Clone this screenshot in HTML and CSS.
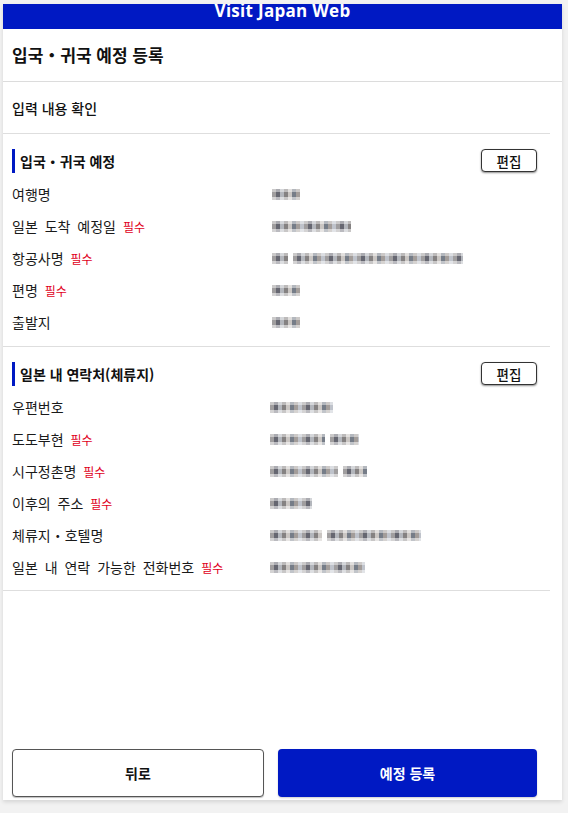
FILE: index.html
```html
<!DOCTYPE html>
<html lang="ko">
<head>
<meta charset="utf-8">
<title>Visit Japan Web</title>
<link rel="stylesheet" href="styles.css">
</head>
<body>
<div class="card">
  <header class="brand"><span class="brand-text">Visit Japan Web</span></header>
  <h1 class="page-title">입국・귀국 예정 등록</h1>
  <div class="subtitle">입력 내용 확인</div>
  <div class="sections">
    <section class="block">
      <div class="block-head">
        <h2 class="block-title">입국・귀국 예정</h2>
        <button class="edit-btn" type="button">편집</button>
      </div>
      <div class="row"><span class="label">여행명</span><span class="mosaic" style="width:28px"></span></div>
      <div class="row"><span class="label">일본 도착 예정일 <em class="req">필수</em></span><span class="mosaic" style="width:79px"></span></div>
      <div class="row"><span class="label">항공사명 <em class="req">필수</em></span><span class="mosaic-group"><span class="mosaic" style="width:16px"></span><span class="mosaic" style="width:170px"></span></span></div>
      <div class="row"><span class="label">편명 <em class="req">필수</em></span><span class="mosaic" style="width:28px"></span></div>
      <div class="row"><span class="label">출발지</span><span class="mosaic" style="width:28px"></span></div>
    </section>
    <section class="block">
      <div class="block-head">
        <h2 class="block-title">일본 내 연락처(체류지)</h2>
        <button class="edit-btn" type="button">편집</button>
      </div>
      <div class="row"><span class="label">우편번호</span><span class="mosaic shift" style="width:63px"></span></div>
      <div class="row"><span class="label">도도부현 <em class="req">필수</em></span><span class="mosaic-group shift"><span class="mosaic" style="width:55px"></span><span class="mosaic" style="width:29px"></span></span></div>
      <div class="row"><span class="label">시구정촌명 <em class="req">필수</em></span><span class="mosaic-group shift"><span class="mosaic" style="width:68px"></span><span class="mosaic" style="width:24px"></span></span></div>
      <div class="row"><span class="label">이후의 주소 <em class="req">필수</em></span><span class="mosaic shift" style="width:42px"></span></div>
      <div class="row"><span class="label">체류지・호텔명</span><span class="mosaic-group shift"><span class="mosaic" style="width:52px"></span><span class="mosaic" style="width:94px"></span></span></div>
      <div class="row"><span class="label">일본 내 연락 가능한 전화번호 <em class="req">필수</em></span><span class="mosaic shift" style="width:95px"></span></div>
    </section>
  </div>
  <div class="actions">
    <button class="btn btn-back" type="button">뒤로</button>
    <button class="btn btn-primary" type="button">예정 등록</button>
  </div>
</div>
</body>
</html>
```

FILE: styles.css
```css
* { box-sizing: border-box; }
html, body { margin: 0; padding: 0; }
body {
  background: #f2f2f2;
  font-family: "Noto Sans CJK KR", "Noto Sans", sans-serif;
  color: #111;
  height: 813px;
  overflow: hidden;
}
.card {
  margin: 4px 6px 0 3px;
  height: 796px;
  background: #fff;
  box-shadow: 0 2px 4px rgba(0,0,0,0.12);
  display: flex;
  flex-direction: column;
}
.brand {
  height: 25px;
  background: #0019c3;
  overflow: hidden;
  text-align: center;
}
.brand-text {
  display: block;
  margin-top: -5px;
  font-family: "Open Sans", sans-serif;
  font-weight: 700;
  font-size: 17px;
  line-height: 24px;
  color: #fff;
  letter-spacing: 0.3px;
}
.page-title {
  margin: 0;
  height: 53px;
  padding: 0 0 2px 9px;
  display: flex;
  align-items: center;
  font-size: 17px;
  font-weight: 700;
  border-bottom: 1px solid #dcdcdc;
}
.subtitle {
  height: 51px;
  padding-left: 9px;
  display: flex;
  align-items: center;
  font-size: 14px;
  font-weight: 500;
}
.sections {
  margin-right: 12px;
}
.block {
  border-top: 1px solid #dedede;
  padding: 15px 13px 7px 9px;
}
.block:last-child { border-bottom: 1px solid #dedede; }
.block:first-child { padding-bottom: 8px; }
.block-head {
  height: 23px;
  display: flex;
  align-items: center;
  justify-content: space-between;
  margin-bottom: 6px;
}
.block-title {
  margin: 0;
  font-size: 14px;
  font-weight: 700;
  border-left: 3px solid #0019c3;
  padding-left: 5px;
  line-height: 24px;
}
.edit-btn {
  width: 56px;
  height: 23px;
  padding: 0;
  border: 1px solid #333;
  border-radius: 4px;
  background: #fff;
  box-shadow: 0 1px 2px rgba(0,0,0,0.45);
  font-family: "Noto Sans CJK KR", sans-serif;
  font-size: 13.5px;
  font-weight: 500;
  color: #111;
}
.row {
  height: 32px;
  display: flex;
  align-items: center;
}
.label {
  width: 260px;
  flex: none;
  font-size: 14px;
  word-spacing: 3px;
  color: #1a1a1a;
}
.req {
  font-style: normal;
  font-size: 12px;
  color: #e0001b;
  word-spacing: 0;
}
.mosaic-group { display: flex; gap: 5px; }
.shift { margin-left: -2px; }
.mosaic {
  display: inline-block;
  height: 11px;
  background:
    linear-gradient(to bottom, rgba(255,255,255,0.45) 0 3px, rgba(255,255,255,0) 3px 8px, rgba(255,255,255,0.55) 8px),
    repeating-linear-gradient(90deg, #a09e9f 0 4px, #666771 4px 8px, #b3b6bc 8px 12px, #858282 12px 16px, #cac6c3 16px 20px, #767d88 20px 24px, #a39d9a 24px 28px, #bfc3cb 28px 32px);
  filter: blur(0.4px);
}
.actions {
  margin-top: auto;
  display: flex;
  gap: 14px;
  padding: 0 25px 3px 9px;
}
.btn {
  height: 48px;
  border-radius: 4px;
  font-family: "Noto Sans CJK KR", sans-serif;
  font-size: 14px;
  font-weight: 700;
}
.btn-back {
  width: 252px;
  background: #fff;
  border: 1px solid #555;
  color: #111;
  box-shadow: 0 1px 1px rgba(0,0,0,0.25);
}
.btn-primary {
  flex: 1;
  background: #0019c3;
  border: none;
  color: #fff;
  box-shadow: 0 1px 2px rgba(0,0,0,0.2);
}
```
